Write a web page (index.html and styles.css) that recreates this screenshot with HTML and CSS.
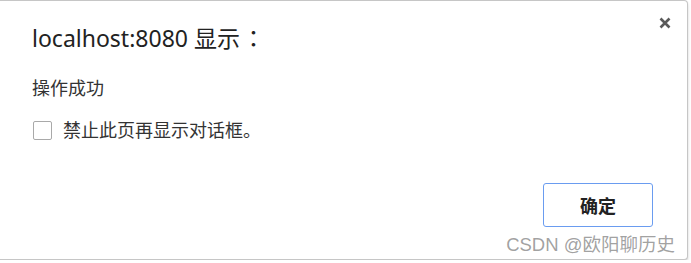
FILE: index.html
```html
<!DOCTYPE html>
<html lang="zh-CN">
<head>
<meta charset="utf-8">
<title>localhost:8080 显示</title>
<link rel="stylesheet" href="styles.css">
</head>
<body>
<div class="dialog">
  <button class="close" aria-label="关闭">
    <svg width="12" height="12" viewBox="0 0 12 12"><path d="M1.5 1.5L10.5 10.5M10.5 1.5L1.5 10.5" stroke="#5a5a5a" stroke-width="2.6" stroke-linecap="butt"/></svg>
  </button>
  <div class="title">localhost:8080 显示<span class="colon" lang="ja">：</span></div>
  <div class="message">操作成功</div>
  <label class="suppress"><span class="box"></span><span>禁止此页再显示对话框。</span></label>
  <div class="actions"><button class="ok">确定</button></div>
  <div class="watermark">CSDN @欧阳聊历史</div>
</div>
</body>
</html>
```
FILE: styles.css
```css
html, body {
  margin: 0;
  padding: 0;
  background: #ffffff;
}
body {
  font-family: "Noto Sans", "Noto Sans CJK SC", sans-serif;
  color: #222;
}
.dialog {
  position: relative;
  box-sizing: border-box;
  width: 688px;
  height: 260px;
  border: 1px solid #c6c6c6;
  border-left: none;
  border-radius: 0 4px 4px 0;
  background: #fff;
  box-shadow: 0 2px 3px rgba(0, 0, 0, 0.18);
  padding: 21px 0 0 32px;
  display: flex;
  flex-direction: column;
}
.close {
  position: absolute;
  top: 15px;
  right: 15px;
  width: 14px;
  height: 14px;
  padding: 0;
  border: none;
  background: none;
  display: flex;
  align-items: center;
  justify-content: center;
}
.title {
  font-size: 23px;
  line-height: 30px;
  color: #222;
}
.colon {
  font-family: "Noto Sans CJK JP", sans-serif;
  margin-left: 2px;
}
.message {
  margin-top: 23px;
  font-size: 18px;
  line-height: 24px;
  color: #333;
}
.suppress {
  margin-top: 18px;
  display: flex;
  align-items: center;
  gap: 11px;
  font-size: 18px;
  line-height: 24px;
  color: #333;
}
.box {
  box-sizing: border-box;
  width: 19px;
  height: 19px;
  border: 1px solid #a9a9a9;
  border-radius: 2px;
  background: #fff;
  margin-left: 1px;
}
.actions {
  margin-top: 41px;
  display: flex;
  justify-content: flex-end;
  padding-right: 34px;
}
.ok {
  box-sizing: border-box;
  width: 110px;
  height: 44px;
  border: 1px solid #6a9cf0;
  border-radius: 3px;
  background: #fff;
  font-family: "Noto Sans CJK SC", sans-serif;
  font-weight: 700;
  font-size: 18px;
  color: #222;
}
.watermark {
  position: absolute;
  right: 12px;
  bottom: 3px;
  font-family: "Liberation Sans", "Noto Sans CJK SC", sans-serif;
  font-size: 18.5px;
  color: rgba(120, 120, 120, 0.7);
}
```
